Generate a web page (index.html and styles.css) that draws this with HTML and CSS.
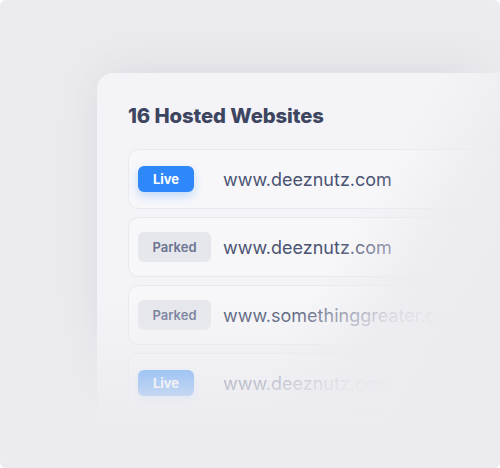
FILE: index.html
```html
<!DOCTYPE html>
<html>
<head>
<meta charset="utf-8">
<link rel="stylesheet" href="styles.css">
</head>
<body>
<div class="frame">
  <div class="card">
    <h2 class="title">16 Hosted Websites</h2>
    <div class="rows">
      <div class="row"><span class="slot"><span class="badge live">Live</span></span><span class="url">www.deeznutz.com</span></div>
      <div class="row"><span class="slot"><span class="badge parked">Parked</span></span><span class="url">www.deeznutz.com</span></div>
      <div class="row"><span class="slot"><span class="badge parked">Parked</span></span><span class="url">www.somethinggreater.com</span></div>
      <div class="row"><span class="slot"><span class="badge live">Live</span></span><span class="url">www.deeznutz.com</span></div>
    </div>
  </div>
  <div class="fade"></div>
</div>
</body>
</html>
```
FILE: styles.css
```css
html, body { margin: 0; padding: 0; background: #ffffff; }
body { font-family: Inter, "Noto Sans", sans-serif; }
.frame {
  position: relative;
  width: 500px;
  height: 468px;
  box-sizing: border-box;
  padding: 73px 0 0 97px;
  border-radius: 6px;
  background: #ececf0;
  overflow: hidden;
}
.card {
  height: 100%;
  box-sizing: border-box;
  background: #f4f4f8;
  border-radius: 16px 0 0 0;
  padding: 30px 0 0 31px;
  box-shadow: 0 -4px 50px rgba(60, 60, 90, 0.10);
}
.title {
  margin: 0 0 21px 0;
  font-size: 20.3px;
  line-height: 25px;
  font-weight: 800;
  color: #3d4560;
  letter-spacing: -0.1px;
}
.rows { display: flex; flex-direction: column; gap: 8px; }
.row {
  display: grid;
  grid-template-columns: 85px 1fr;
  align-items: center;
  height: 60px;
  box-sizing: border-box;
  padding-left: 9px;
  background: #f7f7fa;
  border: 1px solid #e8e8ee;
  border-right: none;
  border-radius: 10px 0 0 10px;
  white-space: nowrap;
}
.slot { display: flex; align-items: center; }
.badge {
  display: inline-flex;
  align-items: center;
  justify-content: center;
  font-size: 13px;
  font-weight: 600;
  border-radius: 6px;
}
.live {
  width: 56px;
  height: 26px;
  background: #2e88fb;
  color: #ffffff;
  font-weight: 700;
  box-shadow: 0 4px 10px rgba(46, 136, 251, 0.28);
}
.parked {
  width: 73px;
  height: 30px;
  background: #e6e7ec;
  color: #6b7391;
}
.url {
  font-size: 18px;
  color: #4b5372;
}
.fade {
  position: absolute;
  inset: 0;
  pointer-events: none;
  background:
    linear-gradient(180deg, rgba(236,236,240,0) 295px, rgba(236,236,240,0.6) 370px, rgba(236,236,240,1) 425px),
    linear-gradient(121deg, rgba(236,236,240,0) 62%, rgba(236,236,240,0.85) 74%, rgba(236,236,240,1) 82%);
}
```
